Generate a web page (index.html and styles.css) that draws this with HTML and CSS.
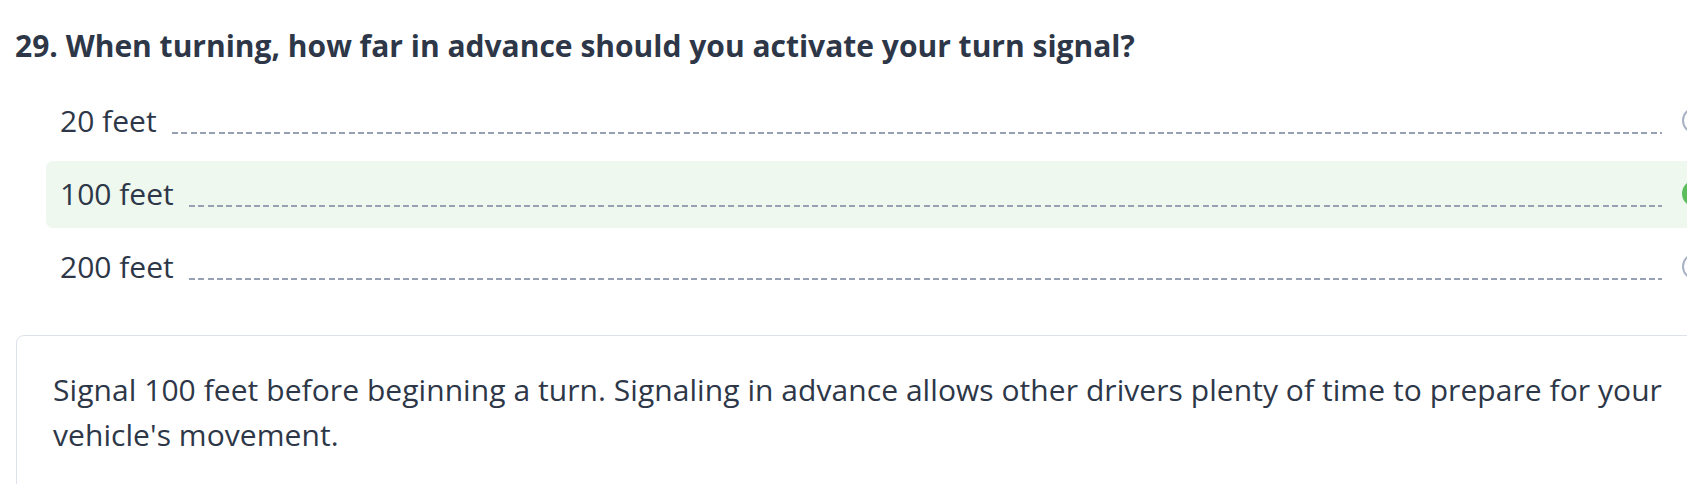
FILE: index.html
```html
<!DOCTYPE html>
<html lang="en">
<head>
<meta charset="utf-8">
<title>Question 29</title>
<link rel="stylesheet" href="styles.css">
</head>
<body>
<div class="page">
  <h1 class="question">29. When turning, how far in advance should you activate your turn signal?</h1>
  <ul class="options">
    <li class="option">
      <span class="label">20 feet</span>
      <span class="leader"></span>
      <span class="radio"></span>
    </li>
    <li class="option option-correct">
      <span class="label">100 feet</span>
      <span class="leader"></span>
      <span class="radio radio-checked"></span>
    </li>
    <li class="option">
      <span class="label">200 feet</span>
      <span class="leader"></span>
      <span class="radio"></span>
    </li>
  </ul>
  <div class="explanation">
    <p>Signal 100 feet before beginning a turn. Signaling in advance allows other drivers plenty of time to prepare for your vehicle's movement.</p>
  </div>
</div>
</body>
</html>
```
FILE: styles.css
```css
html, body {
  margin: 0;
  padding: 0;
  background: #ffffff;
  overflow: hidden;
}

body {
  font-family: "Open Sans", "Noto Sans", "Liberation Sans", sans-serif;
  color: #2d3748;
}

.page {
  width: 1705px;
  padding: 28px 0 0 15px;
}

.question {
  margin: 0;
  font-size: 30px;
  line-height: 36px;
  font-weight: 700;
  color: #2d3748;
}

.options {
  list-style: none;
  margin: 24px 0 0 31px;
  padding: 0;
  display: flex;
  flex-direction: column;
  gap: 6px;
}

.option {
  height: 67px;
  box-sizing: border-box;
  display: flex;
  align-items: center;
  padding: 0 11px 0 14px;
  border-radius: 7px;
}

.option-correct {
  background: #eef8ef;
}

.label {
  font-size: 30px;
  line-height: 36px;
  margin-bottom: 2px;
  white-space: nowrap;
}

.leader {
  flex: 1;
  height: 2px;
  margin: 22px 20px 0 15px;
  background: repeating-linear-gradient(to right, #97a1b3 0 6px, transparent 6px 9.3px);
}

.radio {
  width: 27px;
  height: 27px;
  box-sizing: border-box;
  border: 2px solid #a9b2c4;
  border-radius: 50%;
  flex: none;
  margin-bottom: 3px;
}

.radio-checked {
  border-color: #5cbd5c;
  background: #5cbd5c;
}

.explanation {
  margin: 34px 0 0 1px;
  border: 1px solid #dde2ec;
  border-radius: 8px;
  padding: 31px 36px 40px 36px;
}

.explanation p {
  margin: 0;
  font-size: 30px;
  line-height: 45px;
  letter-spacing: 0.06px;
}
```
